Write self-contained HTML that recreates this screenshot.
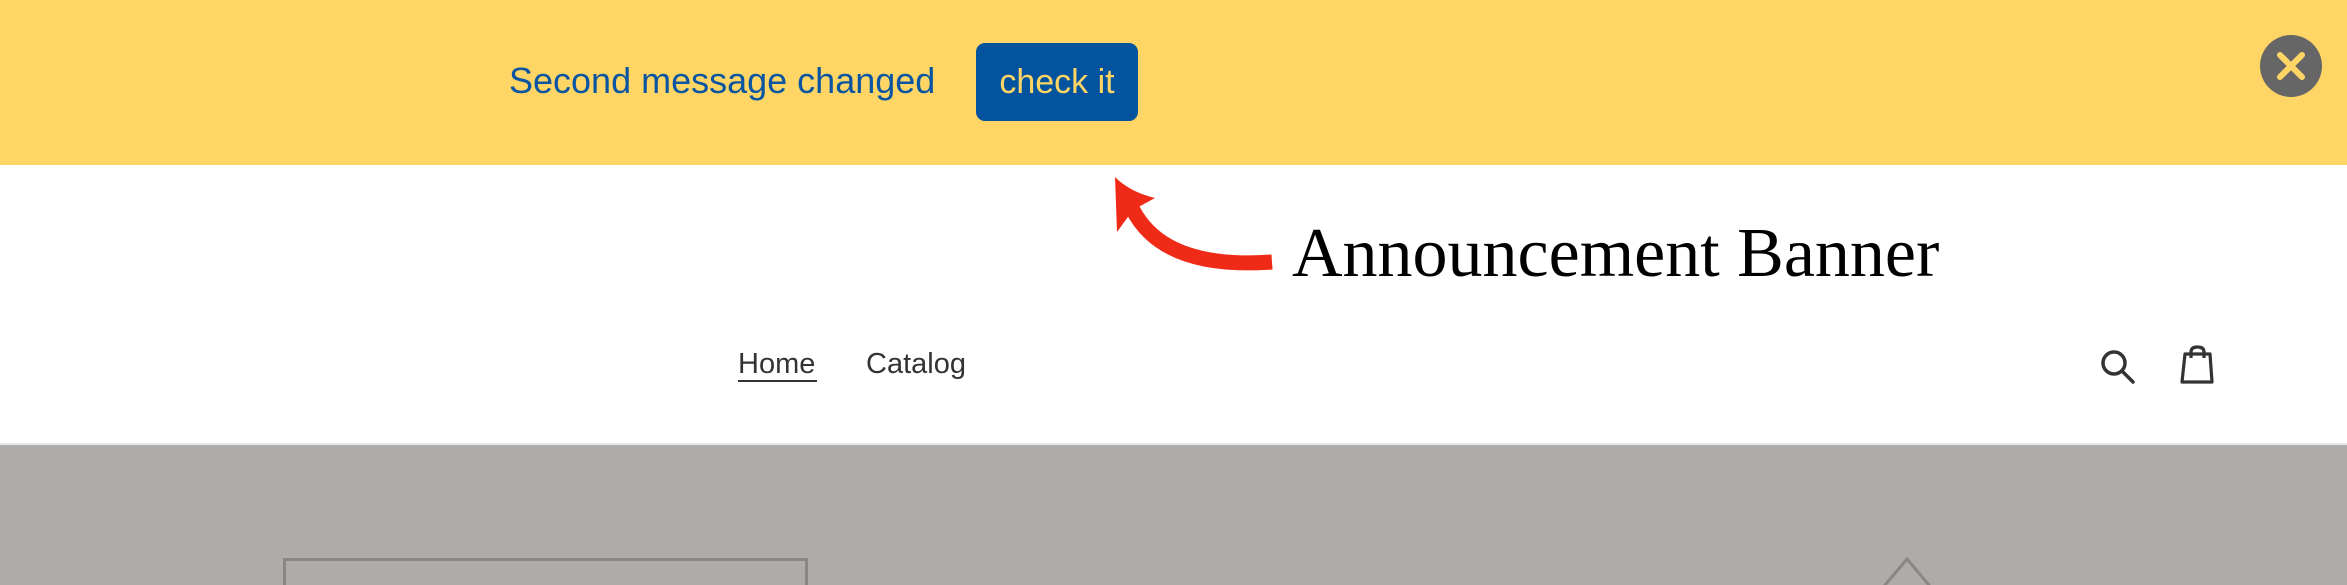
<!DOCTYPE html>
<html><head><meta charset="utf-8"><style>
html,body{margin:0;width:2347px;height:585px;overflow:hidden}
*{box-sizing:border-box}
body{background:#fff;font-family:"Liberation Sans",sans-serif;position:relative}
.banner{position:absolute;left:0;top:0;width:2347px;height:165px;background:#ffd665}
.msg{position:absolute;left:509px;top:61px;font-size:36px;color:#0a55a2;line-height:40px;white-space:nowrap}
.btn{position:absolute;left:976px;top:43px;width:162px;height:78px;background:#03539f;border-radius:9px;color:#ffd665;font-size:34px;line-height:78px;text-align:center}
.close{position:absolute;left:2260px;top:35px;width:62px;height:62px;border-radius:50%;background:#666}
.label{position:absolute;left:1292px;top:212px;font-family:"Liberation Serif",serif;font-size:70px;line-height:84px;color:#000;white-space:nowrap}
.nav{position:absolute;top:346px;font-size:29px;color:#333;line-height:36px}
.ul{position:absolute;left:738px;top:380px;width:79px;height:2px;background:#333}
.hero{position:absolute;left:0;top:443px;width:2347px;height:142px;background:#b0abab;border-top:2px solid #e8e8e8;overflow:hidden}
</style></head><body>
<div class="banner">
 <div class="msg">Second message changed</div>
 <div class="btn">check it</div>
 <div class="close"><svg width="62" height="62" viewBox="0 0 62 62"><path d="M20 20L42 42M42 20L20 42" stroke="#ffd665" stroke-width="6" stroke-linecap="round"/></svg></div>
</div>
<svg style="position:absolute;left:1100px;top:170px" width="190" height="110" viewBox="0 0 190 110">
<path d="M32 38 Q62 100 172 92" stroke="#ef2a17" stroke-width="15" fill="none"/>
<path d="M15 7 L17 62 L33 40 L55 28 Q30 22 15 7Z" fill="#ef2a17"/>
</svg>
<div class="label">Announcement Banner</div>
<div class="nav" style="left:738px">Home</div>
<div class="ul"></div>
<div class="nav" style="left:866px">Catalog</div>
<svg style="position:absolute;left:2098px;top:347px" width="42" height="42" viewBox="0 0 42 42"><circle cx="16" cy="16" r="11" stroke="#333" stroke-width="3.5" fill="none"/><path d="M24 24L35 35" stroke="#333" stroke-width="3.5" stroke-linecap="round"/></svg>
<svg style="position:absolute;left:2177px;top:344px" width="42" height="44" viewBox="0 0 42 44"><path d="M8 10H33L35 38H5Z" stroke="#333" stroke-width="3.2" fill="none" stroke-linejoin="round"/><path d="M14 14V8Q14 3 20.5 3Q27 3 27 8V14" stroke="#333" stroke-width="3.2" fill="none"/></svg>
<div class="hero">
 <div style="position:absolute;left:283px;top:113px;width:525px;height:27px;border:3px solid #8a8686;border-bottom:none"></div>
 <svg style="position:absolute;left:1870px;top:106px" width="80" height="34"><path d="M10 40L37 8L64 40" stroke="#8a8686" stroke-width="3" fill="none"/></svg>
</div>
</body></html>
